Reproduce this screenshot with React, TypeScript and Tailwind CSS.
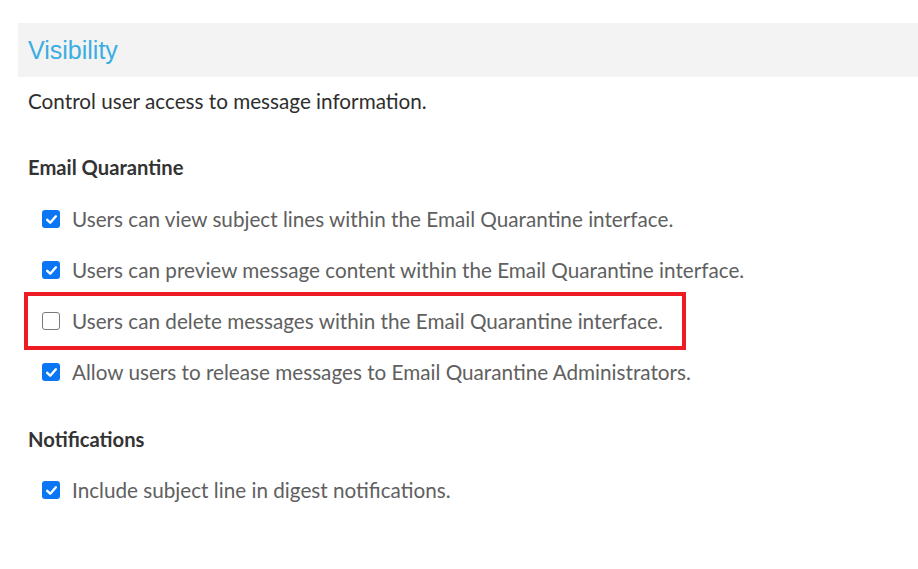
import React from "react";

const Check = ({ checked }: { checked: boolean }) =>
  checked ? (
    <span className="flex h-[18px] w-[18px] shrink-0 items-center justify-center rounded-[3px] bg-[#0b76f4]">
      <svg width="13" height="13" viewBox="0 0 13 13" fill="none">
        <path d="M2.2 6.8 L5.2 9.7 L10.9 3.3" stroke="white" strokeWidth="2.4" strokeLinecap="round" strokeLinejoin="round" />
      </svg>
    </span>
  ) : (
    <span className="block h-[18px] w-[18px] shrink-0 rounded-[3px] border-[1.5px] border-[#7a7a7a] bg-white" />
  );

const Row = ({ checked, label }: { checked: boolean; label: string }) => (
  <div className="flex h-[24px] items-center gap-[12px] pl-[14px]">
    <Check checked={checked} />
    <span className="text-[20.7px] leading-[24px] text-[#606060]">{label}</span>
  </div>
);

export default function App() {
  return (
    <div
      className="relative h-[569px] w-[918px] overflow-hidden bg-white pl-[18px] pt-[23px]"
      style={{ fontFamily: "Lato, 'Noto Sans', sans-serif" }}
    >
      <div className="flex h-[54px] items-center bg-[#f3f3f3] pl-[10px]">
        <span
          className="text-[25px] leading-[30px] text-[#3aaee2]"
          style={{ fontFamily: "'Liberation Sans', Arial, sans-serif" }}
        >
          Visibility
        </span>
      </div>
      <div className="pl-[10px]">
        <p className="mt-[12px] text-[20.7px] leading-[24px] text-[#2e2e2e]">
          Control user access to message information.
        </p>
        <h3 className="mt-[42px] text-[20.2px] font-bold leading-[24px] text-[#333333]">Email Quarantine</h3>
        <div className="mt-[28px] flex flex-col gap-[27px]">
          <Row checked label="Users can view subject lines within the Email Quarantine interface." />
          <Row checked label="Users can preview message content within the Email Quarantine interface." />
          <div className="relative">
            <Row checked={false} label="Users can delete messages within the Email Quarantine interface." />
            <div className="pointer-events-none absolute left-[-4px] top-[-17px] h-[58px] w-[662px] border-[4px] border-[#ed1c24]" />
          </div>
          <Row checked label="Allow users to release messages to Email Quarantine Administrators." />
        </div>
        <h3 className="mt-[43px] text-[20.2px] font-bold leading-[24px] text-[#333333]">Notifications</h3>
        <div className="mt-[27px]">
          <Row checked label="Include subject line in digest notifications." />
        </div>
      </div>
    </div>
  );
}
